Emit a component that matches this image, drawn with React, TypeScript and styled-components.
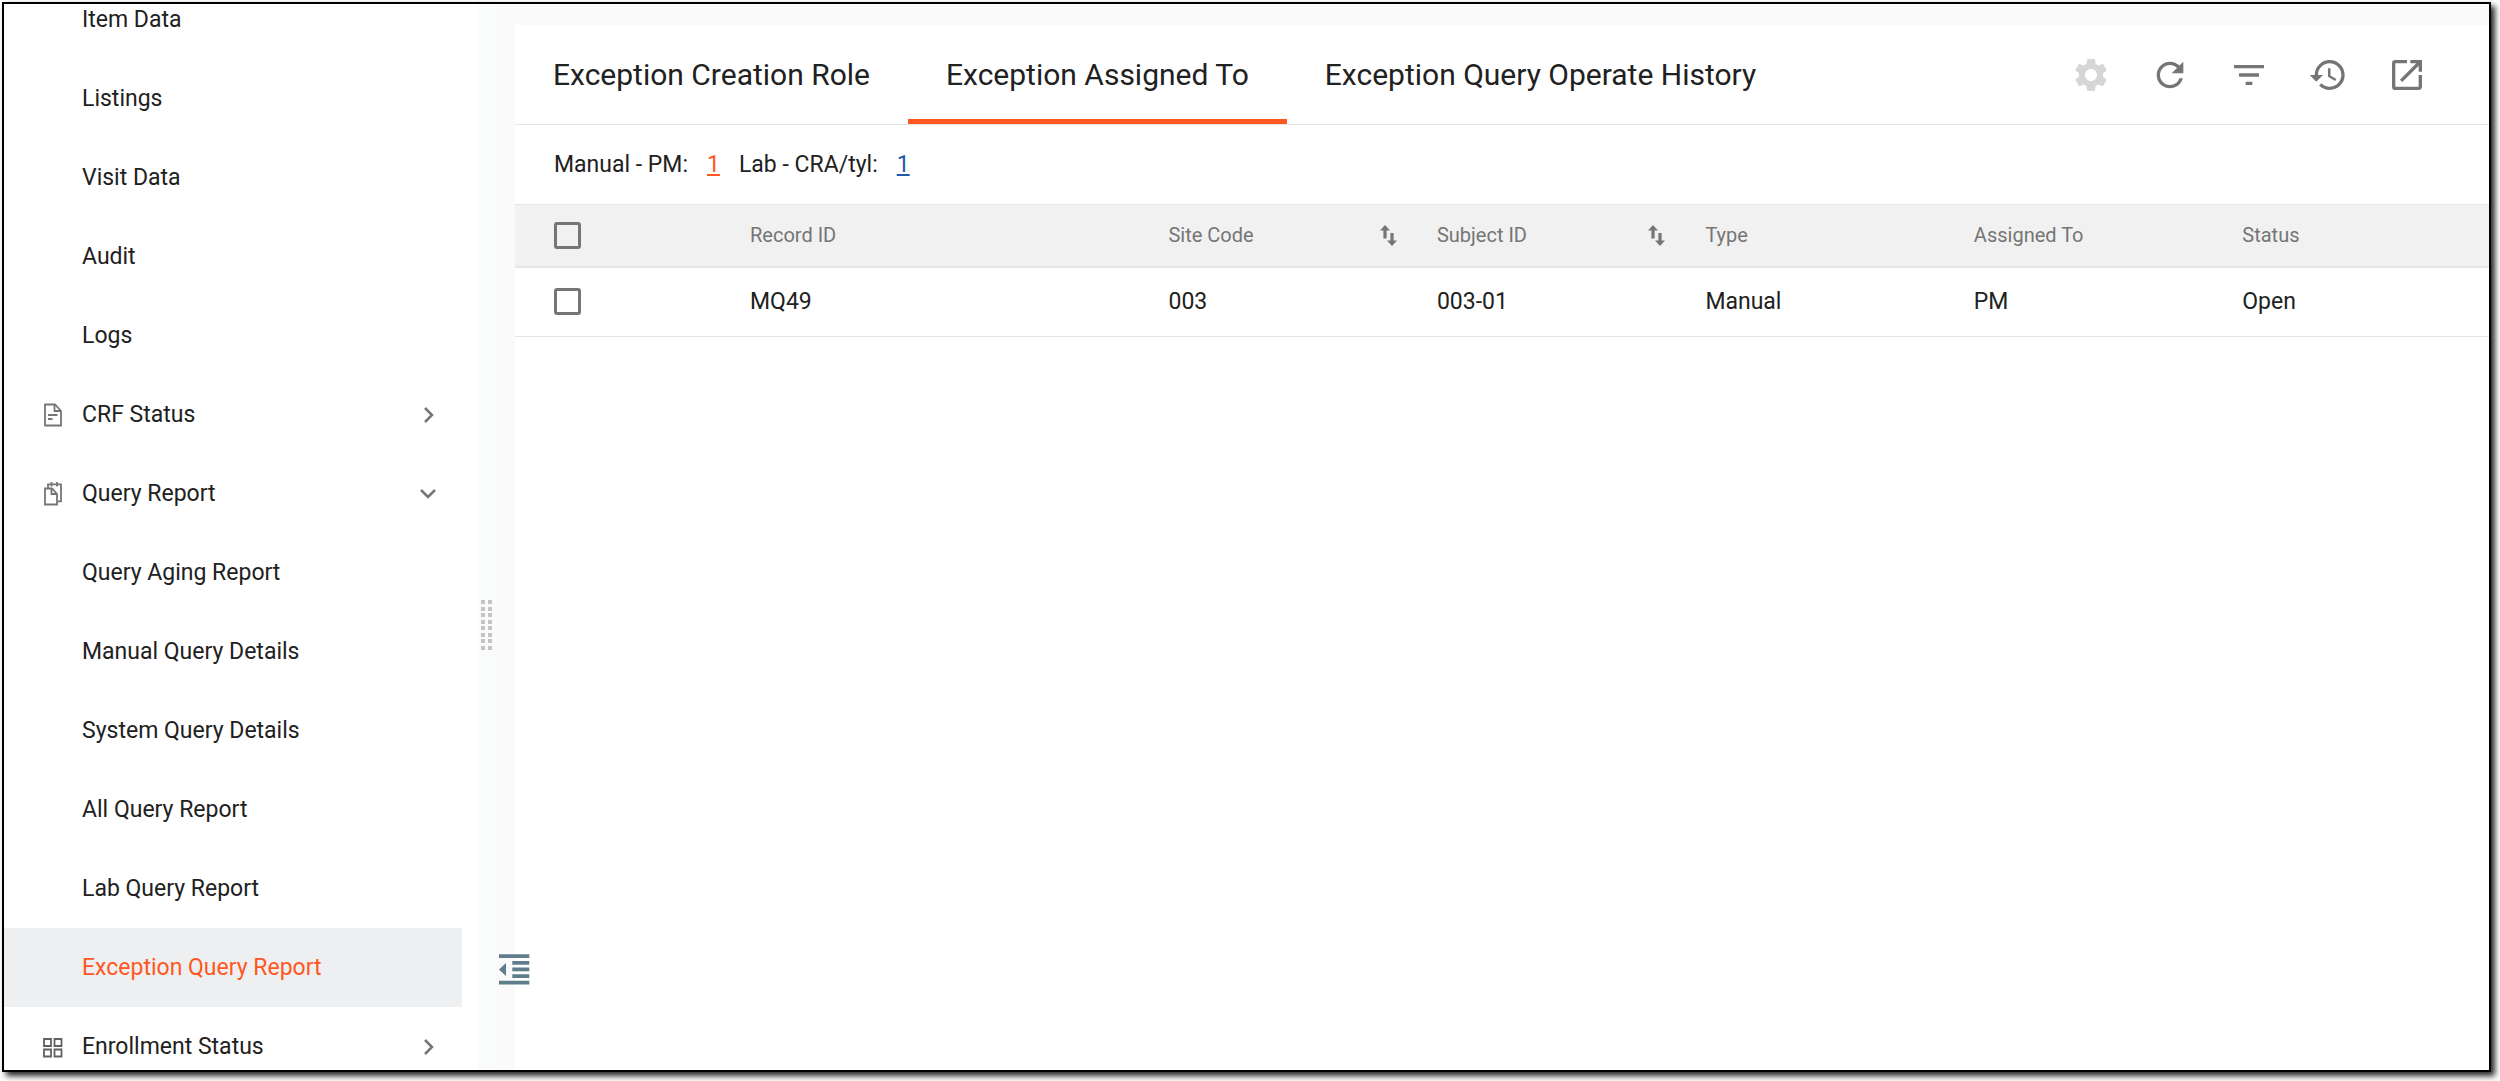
import React from 'react';
import styled, { createGlobalStyle } from 'styled-components';
import { MdSettings, MdRefresh, MdFilterList, MdHistory, MdOpenInNew } from 'react-icons/md';

const GlobalStyle = createGlobalStyle`
  *, *::before, *::after { box-sizing: border-box; }
  body {
    margin: 0;
    background: #fff;
    color: #212121;
    font-family: Roboto, "Liberation Sans", sans-serif;
    font-size: 23px;
    line-height: 28px;
  }
  button { font: inherit; color: inherit; background: none; border: 0; padding: 0; cursor: pointer; }
`;

const Frame = styled.div`
  display: flex;
  height: calc(100vh - 11px);
  margin: 2px 9px 9px 2px;
  border: 2px solid #000;
  background: #fafafa;
  overflow: hidden;
  box-shadow: 4px 4px 6px rgba(0, 0, 0, 0.85);
`;

const Sidebar = styled.nav`
  flex: 0 0 474px;
  padding-right: 16px;
  background: #fff;
  overflow: hidden;
`;

const NavList = styled.ul`
  list-style: none;
  margin: -24px 0 0;
  padding: 0;
`;

const navRow = `
  display: flex;
  align-items: center;
  width: 100%;
  height: 79px;
  text-align: left;
`;

const NavLink = styled.a<{ $active?: boolean }>`
  ${navRow}
  padding: 0 24px 0 78px;
  text-decoration: none;
  color: ${p => (p.$active ? '#ff5722' : '#212121')};
  background: ${p => (p.$active ? '#eeeff1' : 'transparent')};
`;

const NavGroup = styled.button`
  ${navRow}
  && { padding: 0 25px 0 36px; }
`;

const GroupIcon = styled.svg`
  flex: none;
  width: 24px;
  height: 26px;
  margin-right: 18px;
  fill: none;
  stroke: #757575;
  stroke-width: 1.8;
`;

const Chevron = styled.svg`
  width: 18px;
  height: 18px;
  margin-left: auto;
  fill: none;
  stroke: #757575;
  stroke-width: 2.5;
`;

const Gutter = styled.div`
  position: relative;
  display: flex;
  align-items: center;
  justify-content: center;
  flex: 0 0 16px;
  margin-right: 21px;
  padding-top: 176px;
  background: #fafcfb;
`;

const Grip = styled.div`
  display: grid;
  grid-template-columns: 4px 4px;
  column-gap: 3px;
  align-content: space-between;
  height: 50px;
`;

const Dot = styled.span`
  height: 4px;
  background: #c4c4c4;
`;

const Collapse = styled.button`
  position: absolute;
  left: 20px;
  bottom: 85px;
  width: 32px;
  height: 32px;
  z-index: 1;
  svg { display: block; }
`;

const Panel = styled.main`
  flex: 1;
  min-width: 0;
  margin-top: 21px;
  background: #fff;
`;

const Header = styled.header`
  display: flex;
  align-items: center;
  justify-content: space-between;
  height: 100px;
  padding-right: 62px;
  border-bottom: 1px solid #e5e5e5;
`;

const Tabs = styled.div`
  display: flex;
  align-self: stretch;
`;

const Tab = styled.button<{ $active?: boolean }>`
  && {
    padding: 0 38px;
    font-size: 30px;
  }
  box-shadow: ${p => (p.$active ? 'inset 0 -5px #ff5722' : 'none')};
`;

const Toolbar = styled.div`
  display: flex;
  gap: 39px;
`;

const Tool = styled.button`
  width: 40px;
  height: 40px;
  && { color: #757575; }
  svg { display: block; width: 100%; height: 100%; }
  &&:disabled { color: #d6d6d6; }
`;

const Summary = styled.div`
  display: flex;
  align-items: center;
  height: 79px;
  padding: 0 39px;
`;

const CountLink = styled.a<{ $active?: boolean }>`
  margin: 0 19px;
  color: ${p => (p.$active ? '#ff5722' : '#1e5aa8')};
`;

const Table = styled.table`
  width: 100%;
  table-layout: fixed;
  border-collapse: collapse;
`;

const HeadRow = styled.tr`
  height: 62px;
  background: #f1f1f1;
  border-top: 1px solid #e5e5e5;
  border-bottom: 2px solid #e5e5e5;
`;

const BodyRow = styled.tr`
  height: 70px;
  border-bottom: 1px solid #e5e5e5;
`;

const Th = styled.th`
  padding: 0;
  font-size: 20px;
  font-weight: 400;
  text-align: left;
  color: #757575;
`;

const SortHead = styled.div`
  display: flex;
  align-items: center;
  justify-content: space-between;
  padding-right: 40px;
`;

const SortButton = styled.button`
  svg { display: block; }
`;

const Td = styled.td`
  padding: 0;
`;

const CheckTh = styled(Th)`padding-left: 39px;`;
const CheckTd = styled(Td)`padding-left: 39px;`;

const Check = styled.input`
  appearance: none;
  display: block;
  width: 27px;
  height: 27px;
  margin: 0;
  border: 3px solid #757575;
  border-radius: 3px;
`;

const DocIcon = () => (
  <GroupIcon viewBox="0 0 24 26" aria-hidden="true">
    <path d="M5 2.5h10l6 6.500v14.500H5z" />
    <path d="M14.500 2.500v6.500h6.500M8 13h9.500M8 17h4.500" />
  </GroupIcon>
);

const PagesIcon = () => (
  <GroupIcon viewBox="0 0 24 26" aria-hidden="true">
    <path d="M5 7.500h7l5 5.500v10.500H5z" />
    <path d="M11.500 7.500v5.500H17M8 7V3.300h13v17h-3.500M11.500 1v4.500M17 1v4.500" />
  </GroupIcon>
);

const GridIcon = () => (
  <GroupIcon viewBox="0 0 24 26" aria-hidden="true">
    <path stroke="#616161" d="M4 5h7v7H4zM14.500 5h7v7h-7zM4 15.500h7v7H4zM14.500 15.500h7v7h-7z" />
  </GroupIcon>
);

const SortIcon = () => (
  <svg width="17" height="21" viewBox="0 0 17 21" fill="#757575" aria-hidden="true">
    <path d="M5 0l5 5.500H6.600v8H3.400v-8H0zM12 21l-5-5.500h3.400V8h3.200v7.500H17z" />
  </svg>
);

type Item = { label: string; icon?: React.ReactNode; open?: boolean; active?: boolean };

const items: Item[] = [
  { label: 'Item Data' },
  { label: 'Listings' },
  { label: 'Visit Data' },
  { label: 'Audit' },
  { label: 'Logs' },
  { label: 'CRF Status', icon: <DocIcon /> },
  { label: 'Query Report', icon: <PagesIcon />, open: true },
  { label: 'Query Aging Report' },
  { label: 'Manual Query Details' },
  { label: 'System Query Details' },
  { label: 'All Query Report' },
  { label: 'Lab Query Report' },
  { label: 'Exception Query Report', active: true },
  { label: 'Enrollment Status', icon: <GridIcon /> },
];

const columns = [
  { label: 'Record ID', width: '21.2%' },
  { label: 'Site Code', width: '13.6%', sortable: true },
  { label: 'Subject ID', width: '13.6%', sortable: true },
  { label: 'Type', width: '13.6%' },
  { label: 'Assigned To', width: '13.6%' },
  { label: 'Status', width: 'auto' },
];

const rows = [['MQ49', '003', '003-01', 'Manual', 'PM', 'Open']];

export default function App() {
  return (
    <>
      <GlobalStyle />
      <Frame>
        <Sidebar aria-label="Reports">
          <NavList>
            {items.map(item => (
              <li key={item.label}>
                {item.icon ? (
                  <NavGroup type="button" aria-expanded={!!item.open}>
                    {item.icon}
                    {item.label}
                    <Chevron viewBox="0 0 18 18" aria-hidden="true">
                      <path d={item.open ? 'M2 5l7 7 7-7' : 'M6 2l7 7-7 7'} />
                    </Chevron>
                  </NavGroup>
                ) : (
                  <NavLink href="#" $active={item.active} aria-current={item.active ? 'page' : undefined}>
                    {item.label}
                  </NavLink>
                )}
              </li>
            ))}
          </NavList>
        </Sidebar>
        <Gutter>
          <Grip>
            {Array.from({ length: 16 }, (_, i) => <Dot key={i} />)}
          </Grip>
          <Collapse type="button" aria-label="Collapse menu">
            <svg width="32" height="32" viewBox="0 0 32 32" fill="#607d8b" aria-hidden="true">
              <path d="M1 1.300h30.300v3.700H1zM14.300 8h17v3.700h-17zM14.300 14.600h17v3.700h-17zM14.300 21.200h17v3.700h-17zM1 27.800h30.300v3.700H1zM8 10v13L1 16.500z" />
            </svg>
          </Collapse>
        </Gutter>
        <Panel>
          <Header>
            <Tabs role="tablist">
              <Tab type="button" role="tab" aria-selected={false}>Exception Creation Role</Tab>
              <Tab type="button" role="tab" aria-selected $active>Exception Assigned To</Tab>
              <Tab type="button" role="tab" aria-selected={false}>Exception Query Operate History</Tab>
            </Tabs>
            <Toolbar>
              <Tool type="button" aria-label="Settings" disabled><MdSettings /></Tool>
              <Tool type="button" aria-label="Refresh"><MdRefresh /></Tool>
              <Tool type="button" aria-label="Filter"><MdFilterList /></Tool>
              <Tool type="button" aria-label="History"><MdHistory /></Tool>
              <Tool type="button" aria-label="Open in new window"><MdOpenInNew /></Tool>
            </Toolbar>
          </Header>
          <Summary>
            <span>Manual - PM:</span>
            <CountLink href="#" $active>1</CountLink>
            <span>Lab - CRA/tyl:</span>
            <CountLink href="#">1</CountLink>
          </Summary>
          <Table>
            <colgroup>
              <col style={{ width: 235 }} />
              {columns.map(c => <col key={c.label} style={{ width: c.width }} />)}
            </colgroup>
            <thead>
              <HeadRow>
                <CheckTh><Check type="checkbox" aria-label="Select all" /></CheckTh>
                {columns.map(c => (
                  <Th key={c.label} scope="col">
                    {c.sortable ? (
                      <SortHead>
                        {c.label}
                        <SortButton type="button" aria-label={`Sort by ${c.label}`}><SortIcon /></SortButton>
                      </SortHead>
                    ) : c.label}
                  </Th>
                ))}
              </HeadRow>
            </thead>
            <tbody>
              {rows.map(row => (
                <BodyRow key={row[0]}>
                  <CheckTd><Check type="checkbox" aria-label={`Select ${row[0]}`} /></CheckTd>
                  {row.map((cell, i) => <Td key={columns[i].label}>{cell}</Td>)}
                </BodyRow>
              ))}
            </tbody>
          </Table>
        </Panel>
      </Frame>
    </>
  );
}
